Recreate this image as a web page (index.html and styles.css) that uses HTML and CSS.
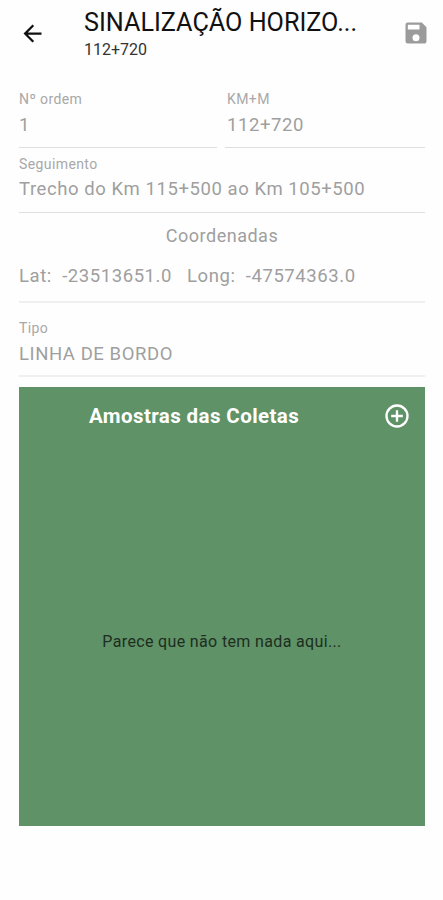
FILE: index.html
```
<!DOCTYPE html>
<html lang="pt-BR">
<head>
<meta charset="UTF-8" />
<meta name="viewport" content="width=device-width, initial-scale=1.0" />
<title>Sinalização Horizontal</title>
<link rel="stylesheet" href="styles.css">
</head>
<body>
  <header class="app-bar">
    <button class="icon-btn" aria-label="Voltar">
      <svg class="back-icon" viewBox="0 0 24 24"><path d="M20 11H7.83l5.59-5.59L12 4l-8 8 8 8 1.41-1.41L7.83 13H20z"/></svg>
    </button>
    <div class="app-title">
      <h1>SINALIZAÇÃO HORIZO...</h1>
      <p>112+720</p>
    </div>
    <button class="icon-btn" aria-label="Salvar" disabled>
      <svg class="save-icon" viewBox="0 0 24 24"><path d="M17 3H5a2 2 0 0 0-2 2v14a2 2 0 0 0 2 2h14c1.100 0 2-.900 2-2V7zm-5 16a3 3 0 1 1 0-6 3 3 0 0 1 0 6zm3-10H5V5h10z"/></svg>
    </button>
  </header>

  <main class="form">
    <div class="field-row">
      <div class="field">
        <span class="label">Nº ordem</span>
        <span class="value">1</span>
      </div>
      <div class="field field-km">
        <span class="label">KM+M</span>
        <span class="value">112+720</span>
      </div>
    </div>

    <div class="field segment">
      <span class="label">Seguimento</span>
      <span class="value">Trecho do Km 115+500 ao Km 105+500</span>
    </div>

    <div class="coords">
      <span class="coords-title">Coordenadas</span>
      <div class="coords-values">
        <span>Lat:&nbsp; -23513651.0</span>
        <span>Long:&nbsp; -47574363.0</span>
      </div>
    </div>

    <div class="field tipo">
      <span class="label">Tipo</span>
      <span class="value">LINHA DE BORDO</span>
    </div>

    <section class="samples">
      <div class="samples-header">
        <h2>Amostras das Coletas</h2>
        <button class="icon-btn" aria-label="Adicionar">
          <svg class="add-icon" viewBox="0 0 24 24"><path d="M13 7h-2v4H7v2h4v4h2v-4h4v-2h-4zm-1-5a10 10 0 1 0 0 20 10 10 0 0 0 0-20zm0 18a8 8 0 1 1 0-16 8 8 0 0 1 0 16z"/></svg>
        </button>
      </div>
      <p class="empty">Parece que não tem nada aqui...</p>
    </section>
  </main>
</body>
</html>
```
FILE: styles.css
```
* {
  box-sizing: border-box;
}

body {
  margin: 0;
  background-color: #fefefe;
  color: #9f9f9f;
  font-family: Roboto, "Liberation Sans", sans-serif;
  min-height: 100vh;
}

h1,
h2,
p {
  margin: 0;
  font-weight: 400;
  white-space: nowrap;
}

svg {
  display: block;
  fill: currentColor;
}

.icon-btn {
  background: none;
  border: none;
  padding: 0;
  color: inherit;
  cursor: pointer;
}

.icon-btn:disabled {
  color: #9b9b9b;
  cursor: default;
}

/* App bar */
.app-bar {
  display: flex;
  align-items: center;
  height: 66px;
  padding: 0 13px 0 19px;
  color: #111;
}

.back-icon {
  width: 27px;
  height: 27px;
}

.app-title {
  flex: 1;
  margin-left: 38px;
  padding-top: 4px;
}

.app-title h1 {
  font-size: 25.2px;
  line-height: 30px;
}

.app-title p {
  font-size: 16px;
  line-height: 24px;
  color: #333;
}

.save-icon {
  width: 28px;
  height: 28px;
}

/* Form */
.form {
  padding: 0 18px 0 19px;
}

.field-row {
  display: grid;
  grid-template-columns: 198px 1fr;
  gap: 8px;
  height: 82px;
  padding-top: 24px;
}

.field {
  display: flex;
  flex-direction: column;
  border-bottom: 1px solid #dedede;
  white-space: nowrap;
}

.field-km {
  padding-left: 2px;
}

.label {
  font-size: 14px;
  line-height: 18px;
  letter-spacing: 0.4px;
  color: #a8a8a8;
}

.value,
.coords {
  font-size: 18.5px;
  line-height: 22px;
  letter-spacing: 0.57px;
}

.value {
  margin-top: 6px;
}

.segment {
  height: 65px;
  padding-top: 7px;
}

.segment .value {
  margin-top: 5px;
}

.coords {
  display: flex;
  flex-direction: column;
  height: 90px;
  padding-top: 12px;
  border-bottom: 2px solid #f0f0f0;
}

.coords-title {
  align-self: center;
  font-size: 18px;
  letter-spacing: 0.5px;
}

.coords-values {
  display: flex;
  gap: 15px;
  margin-top: 18px;
  white-space: nowrap;
}

.tipo {
  height: 74px;
  padding-top: 16px;
  border-bottom: 2px solid #f0f0f0;
}

/* Samples panel */
.samples {
  display: flex;
  flex-direction: column;
  height: 439px;
  margin: 10px 0 0;
  background-color: #5f9267;
}

.samples-header {
  display: flex;
  align-items: center;
  height: 58px;
  padding-right: 14px;
  color: #fff;
}

.samples-header h2 {
  flex: 1;
  padding-left: 70px;
  font-size: 20.5px;
  font-weight: 700;
  letter-spacing: 0.4px;
}

.add-icon {
  width: 28px;
  height: 28px;
}

.empty {
  margin-top: 186px;
  text-align: center;
  font-size: 16px;
  line-height: 22px;
  letter-spacing: 0.35px;
  color: #1d2e20;
}
```
